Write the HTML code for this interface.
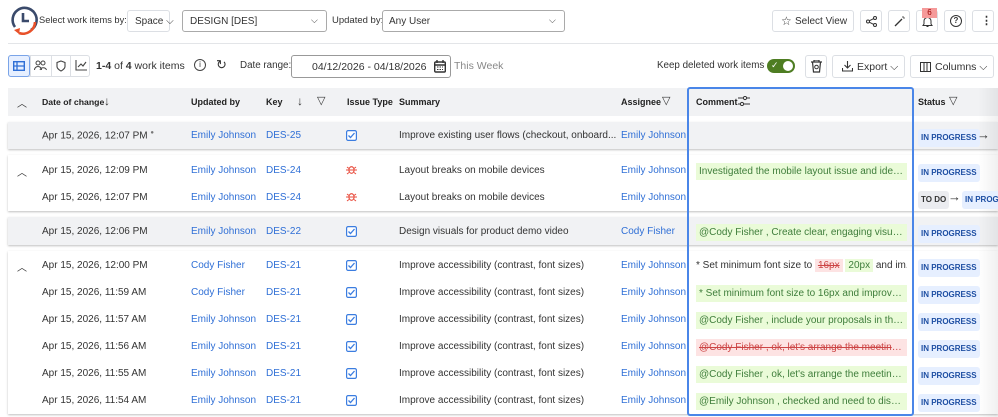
<!DOCTYPE html>
<html><head><meta charset="utf-8"><style>
*{box-sizing:border-box;margin:0;padding:0}
body{width:998px;height:417px;overflow:hidden;background:#fff;font-family:"Liberation Sans",sans-serif;font-size:10px;color:#333;position:relative}
.a{position:absolute;white-space:nowrap}
.btn{position:absolute;border:1px solid #dcdfe4;border-radius:3px;background:#fff}
.lnk{color:#2f6fd6}
.grp{position:absolute;left:8px;right:0;box-shadow:0 1px 2px rgba(0,0,0,.25)}
.h{font-weight:bold;font-size:9px;color:#222}
.pill{position:absolute;white-space:nowrap;background:#e6efff;color:#1e4fa3;font-weight:bold;font-size:8px;padding:4px 3px;border-radius:3px;line-height:10px}
.cm{position:absolute;left:696px;width:211px;background:#eafbd8;color:#3e7d3a;padding:2px 3px;line-height:13px;overflow:hidden;text-overflow:ellipsis;white-space:nowrap}
</style></head><body>
<svg class="a" style="left:9px;top:5px" width="30" height="30" viewBox="0 0 30 30"><path d="M6 22 A12 12 0 1 1 22 25" fill="none" stroke="#3a4a6b" stroke-width="2.6"/><path d="M14 8v8h6" fill="none" stroke="#3a4a6b" stroke-width="2.6"/><path d="M26 17 A12 12 0 0 1 10 28" fill="none" stroke="#e8512a" stroke-width="2.6"/><path d="M5 25l5 4 1-6z" fill="#e8512a"/></svg>
<div class="a" style="left:39px;top:15px;font-size:9.3px">Select work items by:</div>
<div class="btn" style="left:127px;top:10px;width:43px;height:22px"><span class="a" style="left:7px;top:5px">Space ⌵</span></div>
<div class="btn" style="left:182px;top:10px;width:145px;height:22px;border-color:#aaa"><span class="a" style="left:7px;top:5px">DESIGN [DES]</span><span class="a" style="left:128px;top:4px;font-size:9px">⌵</span></div>
<div class="a" style="left:332px;top:15px;font-size:9.5px">Updated by:</div>
<div class="btn" style="left:382px;top:10px;width:183px;height:22px;border-color:#aaa"><span class="a" style="left:6px;top:5px">Any User</span><span class="a" style="left:166px;top:4px;font-size:9px">⌵</span></div>
<div class="btn" style="left:772px;top:10px;width:82px;height:22px"><span class="a" style="left:8px;top:3px;font-size:12px">☆</span><span class="a" style="left:22px;top:5px">Select View</span></div>
<div class="btn" style="left:860px;top:10px;width:22px;height:22px"><svg class="a" style="left:5px;top:5px" width="11" height="11"><circle cx="2" cy="5.5" r="1.5" fill="none" stroke="#333"/><circle cx="9" cy="2" r="1.5" fill="none" stroke="#333"/><circle cx="9" cy="9" r="1.5" fill="none" stroke="#333"/><path d="M3.3 4.8l4.4-2.2M3.3 6.2l4.4 2.2" stroke="#333"/></svg></div>
<div class="btn" style="left:888px;top:10px;width:22px;height:22px"><svg class="a" style="left:5px;top:4px" width="12" height="12"><path d="M1 11l7-7" stroke="#333" stroke-width="1.3"/><path d="M9 1v2M11 3H9" stroke="#333" stroke-width=".8"/></svg></div>
<div class="btn" style="left:916px;top:10px;width:22px;height:22px"><svg class="a" style="left:5px;top:5px" width="11" height="12"><path d="M2 8V5a3.5 3.5 0 0 1 7 0v3l1 1.5H1z M4.5 10.5h2" fill="none" stroke="#333"/></svg></div>
<div class="a" style="left:922px;top:8px;width:15px;height:10px;background:#f59a9a;font-size:8px;text-align:center;line-height:10px;color:#900">6</div>
<div class="btn" style="left:944px;top:10px;width:22px;height:22px"><span class="a" style="left:5px;top:4px;width:12px;height:12px;border:1.3px solid #333;border-radius:50%;font-size:8px;line-height:10px;text-align:center;font-weight:bold">?</span></div>
<div class="btn" style="left:972px;top:10px;width:22px;height:22px"><span class="a" style="left:8px;top:3px;font-weight:bold;font-size:11px">⋮</span></div>
<div class="a" style="left:8px;top:43px;width:990px;height:1px;background:#e3e5e8"></div>
<div class="btn" style="left:8px;top:55px;width:82px;height:22px"></div>
<div class="a" style="left:8px;top:55px;width:22px;height:22px;background:#e6efff;border:1px solid #7aa4e8;border-radius:3px"></div>
<svg class="a" style="left:13px;top:61px" width="12" height="10"><rect x="0.7" y="0.7" width="10.6" height="8.6" fill="none" stroke="#2f6fd6" stroke-width="1.4"/><path d="M0 5h12M4 0v10" stroke="#2f6fd6" stroke-width="1.3"/></svg>
<div class="a" style="left:30px;top:55px;width:1px;height:22px;background:#dcdfe4"></div>
<div class="a" style="left:51px;top:55px;width:1px;height:22px;background:#dcdfe4"></div>
<div class="a" style="left:70px;top:55px;width:1px;height:22px;background:#dcdfe4"></div>
<svg class="a" style="left:34px;top:60px" width="13" height="11"><circle cx="4" cy="3" r="2" fill="none" stroke="#444"/><circle cx="9" cy="3" r="2" fill="none" stroke="#444"/><path d="M0.5 10a3.5 3.5 0 0 1 7 0M6 10a3.5 3.5 0 0 1 6.5 0" fill="none" stroke="#444"/></svg>
<svg class="a" style="left:56px;top:60px" width="10" height="12"><path d="M5 1L9 2.5v4C9 9 5 11 5 11S1 9 1 6.5v-4z" fill="none" stroke="#444" stroke-width="1.1"/></svg>
<svg class="a" style="left:75px;top:60px" width="12" height="11"><path d="M1 0v10h11M3 7l3-3 2 2 3-4" fill="none" stroke="#444" stroke-width="1.1"/></svg>
<div class="a" style="left:96px;top:60px;font-size:10.5px"><b>1-4</b> of <b>4</b> work items</div>
<div class="a" style="left:194px;top:59px;width:12px;height:12px;border:1.2px solid #444;border-radius:50%;font-size:8px;text-align:center;line-height:10px">i</div>
<div class="a" style="left:216px;top:57px;font-size:13px">↻</div>
<div class="a" style="left:240px;top:60px;font-size:9.8px">Date range:</div>
<div class="btn" style="left:291px;top:55px;width:160px;height:23px;border-color:#999"><span class="a" style="left:20px;top:5px;font-size:10.5px">04/12/2026 - 04/18/2026</span><svg class="a" style="left:142px;top:4px" width="12" height="13"><rect x="0.7" y="2" width="10.6" height="10" rx="1" fill="none" stroke="#333" stroke-width="1.4"/><path d="M0 5h12M3 0v3M9 0v3" stroke="#333" stroke-width="1.4"/><path d="M3 7h6M3 9.5h6" stroke="#333" stroke-dasharray="1.5 1"/></svg></div>
<div class="a" style="left:454px;top:60px;color:#888;font-size:10.5px">This Week</div>
<div class="a" style="left:657px;top:60px;font-size:9.8px">Keep deleted work items</div>
<div class="a" style="left:767px;top:59px;width:28px;height:14px;border-radius:7px;background:#4e7d22"><span class="a" style="left:4px;top:1px;color:#fff;font-size:9px">✓</span><span class="a" style="right:2px;top:2px;width:10px;height:10px;border-radius:50%;background:#fff"></span></div>
<div class="btn" style="left:805px;top:55px;width:22px;height:23px"><svg class="a" style="left:5px;top:4px" width="11" height="13"><path d="M0 2h11M3 2V0h5v2M1.5 2l1 10h6l1-10" fill="none" stroke="#333" stroke-width="1.2"/><circle cx="5.5" cy="7" r="1.8" fill="none" stroke="#333"/></svg></div>
<div class="btn" style="left:832px;top:55px;width:73px;height:23px"><svg class="a" style="left:9px;top:5px" width="11" height="11"><path d="M5.5 0v7M2.5 4l3 3 3-3M0.5 7v3h10V7" fill="none" stroke="#333" stroke-width="1.1"/></svg><span class="a" style="left:24px;top:5px;font-size:10.5px">Export ⌵</span></div>
<div class="btn" style="left:910px;top:55px;width:84px;height:23px"><svg class="a" style="left:9px;top:6px" width="11" height="10"><rect x="0.5" y="0.5" width="10" height="9" fill="none" stroke="#333"/><path d="M4 0v10M7 0v10" stroke="#333"/></svg><span class="a" style="left:24px;top:5px;font-size:10.5px">Columns ⌵</span></div>
<div class="a" style="left:8px;top:88px;width:990px;height:28px;background:#f1f2f4"></div>
<div class="a" style="left:17px;top:95px;font-size:10px">︿</div>
<div class="a h" style="left:42px;top:97px;font-size:8.7px">Date of change</div><div class="a" style="left:104px;top:94px;font-size:12px">↓</div>
<div class="a h" style="left:191px;top:97px">Updated by</div>
<div class="a h" style="left:266px;top:97px">Key</div><div class="a" style="left:297px;top:94px;font-size:12px">↓</div><div class="a" style="left:317px;top:94px;font-size:11px">▽</div>
<div class="a h" style="left:347px;top:97px">Issue Type</div>
<div class="a h" style="left:399px;top:97px">Summary</div>
<div class="a h" style="left:621px;top:97px">Assignee</div><div class="a" style="left:662px;top:94px;font-size:11px">▽</div>
<div class="a h" style="left:696px;top:97px">Comment</div>
<svg class="a" style="left:738px;top:96px" width="12" height="10"><path d="M0 2h5M9 2h3M0 8h2M6 8h6" stroke="#333"/><circle cx="7" cy="2" r="1.6" fill="none" stroke="#333"/><circle cx="4" cy="8" r="1.6" fill="none" stroke="#333"/></svg>
<div class="a h" style="left:918px;top:97px">Status</div><div class="a" style="left:949px;top:94px;font-size:11px">▽</div>
<div class="grp" style="top:122px;height:27px;background:#f1f2f4"></div>
<div class="grp" style="top:155px;height:56px;background:#fff"></div>
<div class="grp" style="top:217px;height:28px;background:#f1f2f4"></div>
<div class="grp" style="top:251px;height:163px;background:#fff"></div>
<div class="a" style="left:978px;top:88px;width:20px;height:329px;background:linear-gradient(90deg,rgba(0,0,0,0),rgba(0,0,0,.06))"></div>
<div class="a" style="left:42px;top:130px">Apr 15, 2026, 12:07 PM <sup style="font-size:6px;color:#777">●</sup></div><div class="a lnk" style="left:191px;top:130px">Emily Johnson</div><div class="a lnk" style="left:266px;top:130px">DES-25</div><div class="a" style="left:399px;top:130px">Improve existing user flows (checkout, onboard...</div><div class="a lnk" style="left:621px;top:130px">Emily Johnson</div>
<div class="a" style="left:17px;top:164px;font-size:10px">︿</div>
<div class="a" style="left:42px;top:165px">Apr 15, 2026, 12:09 PM</div><div class="a lnk" style="left:191px;top:165px">Emily Johnson</div><div class="a lnk" style="left:266px;top:165px">DES-24</div><div class="a" style="left:399px;top:165px">Layout breaks on mobile devices</div><div class="a lnk" style="left:621px;top:165px">Emily Johnson</div>
<div class="a" style="left:42px;top:192px">Apr 15, 2026, 12:07 PM</div><div class="a lnk" style="left:191px;top:192px">Emily Johnson</div><div class="a lnk" style="left:266px;top:192px">DES-24</div><div class="a" style="left:399px;top:192px">Layout breaks on mobile devices</div><div class="a lnk" style="left:621px;top:192px">Emily Johnson</div>
<div class="a" style="left:42px;top:226px">Apr 15, 2026, 12:06 PM</div><div class="a lnk" style="left:191px;top:226px">Emily Johnson</div><div class="a lnk" style="left:266px;top:226px">DES-22</div><div class="a" style="left:399px;top:226px">Design visuals for product demo video</div><div class="a lnk" style="left:621px;top:226px">Cody Fisher</div>
<div class="a" style="left:17px;top:259px;font-size:10px">︿</div>
<div class="a" style="left:42px;top:260px">Apr 15, 2026, 12:00 PM</div><div class="a lnk" style="left:191px;top:260px">Cody Fisher</div><div class="a lnk" style="left:266px;top:260px">DES-21</div><div class="a" style="left:399px;top:260px">Improve accessibility (contrast, font sizes)</div><div class="a lnk" style="left:621px;top:260px">Emily Johnson</div>
<div class="a" style="left:42px;top:287px">Apr 15, 2026, 11:59 AM</div><div class="a lnk" style="left:191px;top:287px">Cody Fisher</div><div class="a lnk" style="left:266px;top:287px">DES-21</div><div class="a" style="left:399px;top:287px">Improve accessibility (contrast, font sizes)</div><div class="a lnk" style="left:621px;top:287px">Emily Johnson</div>
<div class="a" style="left:42px;top:314px">Apr 15, 2026, 11:57 AM</div><div class="a lnk" style="left:191px;top:314px">Emily Johnson</div><div class="a lnk" style="left:266px;top:314px">DES-21</div><div class="a" style="left:399px;top:314px">Improve accessibility (contrast, font sizes)</div><div class="a lnk" style="left:621px;top:314px">Emily Johnson</div>
<div class="a" style="left:42px;top:341px">Apr 15, 2026, 11:56 AM</div><div class="a lnk" style="left:191px;top:341px">Emily Johnson</div><div class="a lnk" style="left:266px;top:341px">DES-21</div><div class="a" style="left:399px;top:341px">Improve accessibility (contrast, font sizes)</div><div class="a lnk" style="left:621px;top:341px">Emily Johnson</div>
<div class="a" style="left:42px;top:368px">Apr 15, 2026, 11:55 AM</div><div class="a lnk" style="left:191px;top:368px">Emily Johnson</div><div class="a lnk" style="left:266px;top:368px">DES-21</div><div class="a" style="left:399px;top:368px">Improve accessibility (contrast, font sizes)</div><div class="a lnk" style="left:621px;top:368px">Emily Johnson</div>
<div class="a" style="left:42px;top:395px">Apr 15, 2026, 11:54 AM</div><div class="a lnk" style="left:191px;top:395px">Emily Johnson</div><div class="a lnk" style="left:266px;top:395px">DES-21</div><div class="a" style="left:399px;top:395px">Improve accessibility (contrast, font sizes)</div><div class="a lnk" style="left:621px;top:395px">Emily Johnson</div>
<svg width="0" height="0" style="position:absolute"><defs><g id="ck"><rect x="0.6" y="0.6" width="9.8" height="9.8" rx="1.5" fill="#fff" stroke="#3b7de0" stroke-width="1.2"/><path d="M2.5 5.5l2 2 4-4.5" fill="none" stroke="#3b7de0" stroke-width="1.3"/></g><g id="bg"><ellipse cx="5.5" cy="6" rx="2.6" ry="3.3" fill="none" stroke="#e84c3d" stroke-width="1.1"/><path d="M1 3l2 1.5M10 3l-2 1.5M0 6h3M8 6h3M1 10l2-1.5M10 10l-2-1.5M3 6h5" stroke="#e84c3d" stroke-width="1"/></g></defs></svg>
<svg class="a" style="left:346px;top:130px" width="11" height="11"><use href="#ck"/></svg>
<svg class="a" style="left:346px;top:164px" width="11" height="12"><use href="#bg"/></svg>
<svg class="a" style="left:346px;top:191px" width="11" height="12"><use href="#bg"/></svg>
<svg class="a" style="left:346px;top:226px" width="11" height="11"><use href="#ck"/></svg>
<svg class="a" style="left:346px;top:260px" width="11" height="11"><use href="#ck"/></svg>
<svg class="a" style="left:346px;top:287px" width="11" height="11"><use href="#ck"/></svg>
<svg class="a" style="left:346px;top:314px" width="11" height="11"><use href="#ck"/></svg>
<svg class="a" style="left:346px;top:341px" width="11" height="11"><use href="#ck"/></svg>
<svg class="a" style="left:346px;top:368px" width="11" height="11"><use href="#ck"/></svg>
<svg class="a" style="left:346px;top:395px" width="11" height="11"><use href="#ck"/></svg>
<div class="cm" style="top:163px">Investigated the mobile layout issue and identi...</div>
<div class="cm" style="top:224px">@Cody Fisher , Create clear, engaging visuals t...</div>
<div class="a" style="left:696px;top:259px;line-height:14px;width:211px;overflow:hidden">* Set minimum font size to <span style="background:#fde3e3;color:#c44;text-decoration:line-through;padding:1px 3px">16px</span> <span style="background:#eafbd8;color:#3e7d3a;padding:1px 3px">20px</span> and im...</div>
<div class="cm" style="top:285px">* Set minimum font size to 16px and improve li...</div>
<div class="cm" style="top:312px">@Cody Fisher , include your proposals in the ta...</div>
<div class="cm" style="top:339px;background:#fde3e3;color:#c44;text-decoration:line-through">@Cody Fisher , ok, let's arrange the meeting thi...</div>
<div class="cm" style="top:366px">@Cody Fisher , ok, let's arrange the meeting thi...</div>
<div class="cm" style="top:393px">@Emily Johnson , checked and need to discus...</div>
<div class="pill" style="left:918px;top:129px">IN PROGRESS</div><div class="a" style="left:977px;top:127px;font-size:13px">→</div>
<div class="pill" style="left:918px;top:164px">IN PROGRESS</div>
<div class="pill" style="left:918px;top:191px;background:#ebecf0;color:#333">TO DO</div><div class="a" style="left:948px;top:189px;font-size:13px">→</div><div class="pill" style="left:962px;top:191px">IN PROGRESS</div>
<div class="pill" style="left:918px;top:225px">IN PROGRESS</div>
<div class="pill" style="left:918px;top:259px">IN PROGRESS</div>
<div class="pill" style="left:918px;top:286px">IN PROGRESS</div>
<div class="pill" style="left:918px;top:313px">IN PROGRESS</div>
<div class="pill" style="left:918px;top:340px">IN PROGRESS</div>
<div class="pill" style="left:918px;top:367px">IN PROGRESS</div>
<div class="pill" style="left:918px;top:394px">IN PROGRESS</div>
<div class="a" style="left:687px;top:87px;width:227px;height:329px;border:2px solid #4a86e8;border-radius:3px"></div>
</body></html>
